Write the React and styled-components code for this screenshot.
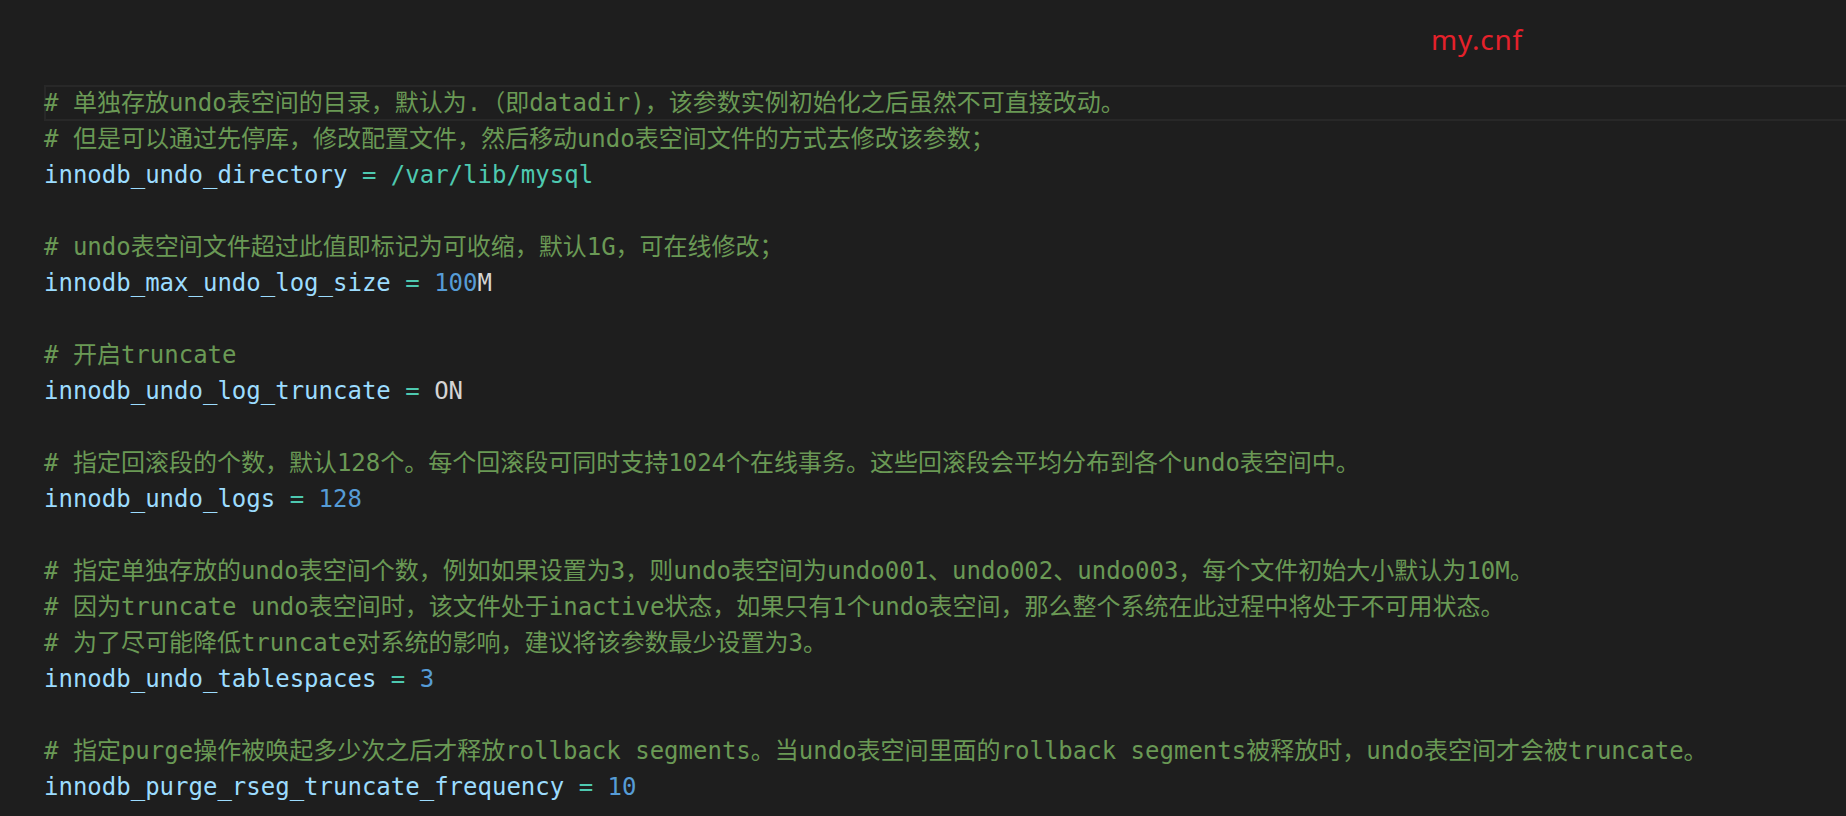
import styled, { createGlobalStyle } from "styled-components";

const colors = {
    bg: "#1e1e1e",
    lineBorder: "#282828",
    comment: "#6a9955",
    key: "#9cdcfe",
    op: "#4ec9b0",
    str: "#4ec9b0",
    num: "#569cd6",
    plain: "#d4d4d4",
    title: "#e5212b",
};

// one entry per editor line, null = blank line
const lines = [
    [["comment", "# 单独存放undo表空间的目录，默认为.（即datadir)，该参数实例初始化之后虽然不可直接改动。"]],
    [["comment", "# 但是可以通过先停库，修改配置文件，然后移动undo表空间文件的方式去修改该参数；"]],
    [["key", "innodb_undo_directory"], ["plain", " "], ["op", "="], ["plain", " "], ["str", "/var/lib/mysql"]],
    null,
    [["comment", "# undo表空间文件超过此值即标记为可收缩，默认1G，可在线修改；"]],
    [["key", "innodb_max_undo_log_size"], ["plain", " "], ["op", "="], ["plain", " "], ["num", "100"], ["plain", "M"]],
    null,
    [["comment", "# 开启truncate"]],
    [["key", "innodb_undo_log_truncate"], ["plain", " "], ["op", "="], ["plain", " ON"]],
    null,
    [["comment", "# 指定回滚段的个数，默认128个。每个回滚段可同时支持1024个在线事务。这些回滚段会平均分布到各个undo表空间中。"]],
    [["key", "innodb_undo_logs"], ["plain", " "], ["op", "="], ["plain", " "], ["num", "128"]],
    null,
    [["comment", "# 指定单独存放的undo表空间个数，例如如果设置为3，则undo表空间为undo001、undo002、undo003，每个文件初始大小默认为10M。"]],
    [["comment", "# 因为truncate undo表空间时，该文件处于inactive状态，如果只有1个undo表空间，那么整个系统在此过程中将处于不可用状态。"]],
    [["comment", "# 为了尽可能降低truncate对系统的影响，建议将该参数最少设置为3。"]],
    [["key", "innodb_undo_tablespaces"], ["plain", " "], ["op", "="], ["plain", " "], ["num", "3"]],
    null,
    [["comment", "# 指定purge操作被唤起多少次之后才释放rollback segments。当undo表空间里面的rollback segments被释放时，undo表空间才会被truncate。"]],
    [["key", "innodb_purge_rseg_truncate_frequency"], ["plain", " "], ["op", "="], ["plain", " "], ["num", "10"]],
];

export default function App() {
    return (
        <>
            <GlobalStyle />
            <EditorPage>
                <TitleBar>
                    <FileName>my.cnf</FileName>
                </TitleBar>
                <CodeArea>
                    {lines.map((tokens, i) => (
                        <CodeLine key={i} $active={i === 0}>
                            {tokens
                                ? tokens.map(([kind, text], j) => (
                                      <Token key={j} $kind={kind}>{text}</Token>
                                  ))
                                : " "}
                        </CodeLine>
                    ))}
                </CodeArea>
            </EditorPage>
        </>
    );
}

const GlobalStyle = createGlobalStyle`
    html, body {
        margin: 0;
        padding: 0;
        background: ${colors.bg};
    }
`;

const EditorPage = styled.div`
    width: 1846px;
    height: 816px;
    background: ${colors.bg};
    display: flex;
    flex-direction: column;
    overflow: hidden;
`;

const TitleBar = styled.div`
    height: 85px;
    box-sizing: border-box;
    padding: 20px 0 0 1431px;
    display: flex;
    align-items: flex-start;
`;

const FileName = styled.span`
    font-family: "Noto Sans", "Open Sans", sans-serif;
    font-size: 28px;
    letter-spacing: 0.8px;
    line-height: normal;
    color: ${colors.title};
`;

const CodeArea = styled.div`
    display: flex;
    flex-direction: column;
    padding-left: 44px;
    font-family: "DejaVu Sans Mono", "Noto Sans CJK SC", monospace;
    font-size: 24px;
`;

const CodeLine = styled.div`
    height: 36px;
    line-height: 36px;
    white-space: pre;
    box-shadow: ${(p) =>
        p.$active
            ? `inset 2px 0 0 ${colors.lineBorder}, inset 0 2px 0 ${colors.lineBorder}, inset 0 -2px 0 ${colors.lineBorder}`
            : "none"};
`;

const Token = styled.span`
    color: ${(p) => colors[p.$kind]};
`;
